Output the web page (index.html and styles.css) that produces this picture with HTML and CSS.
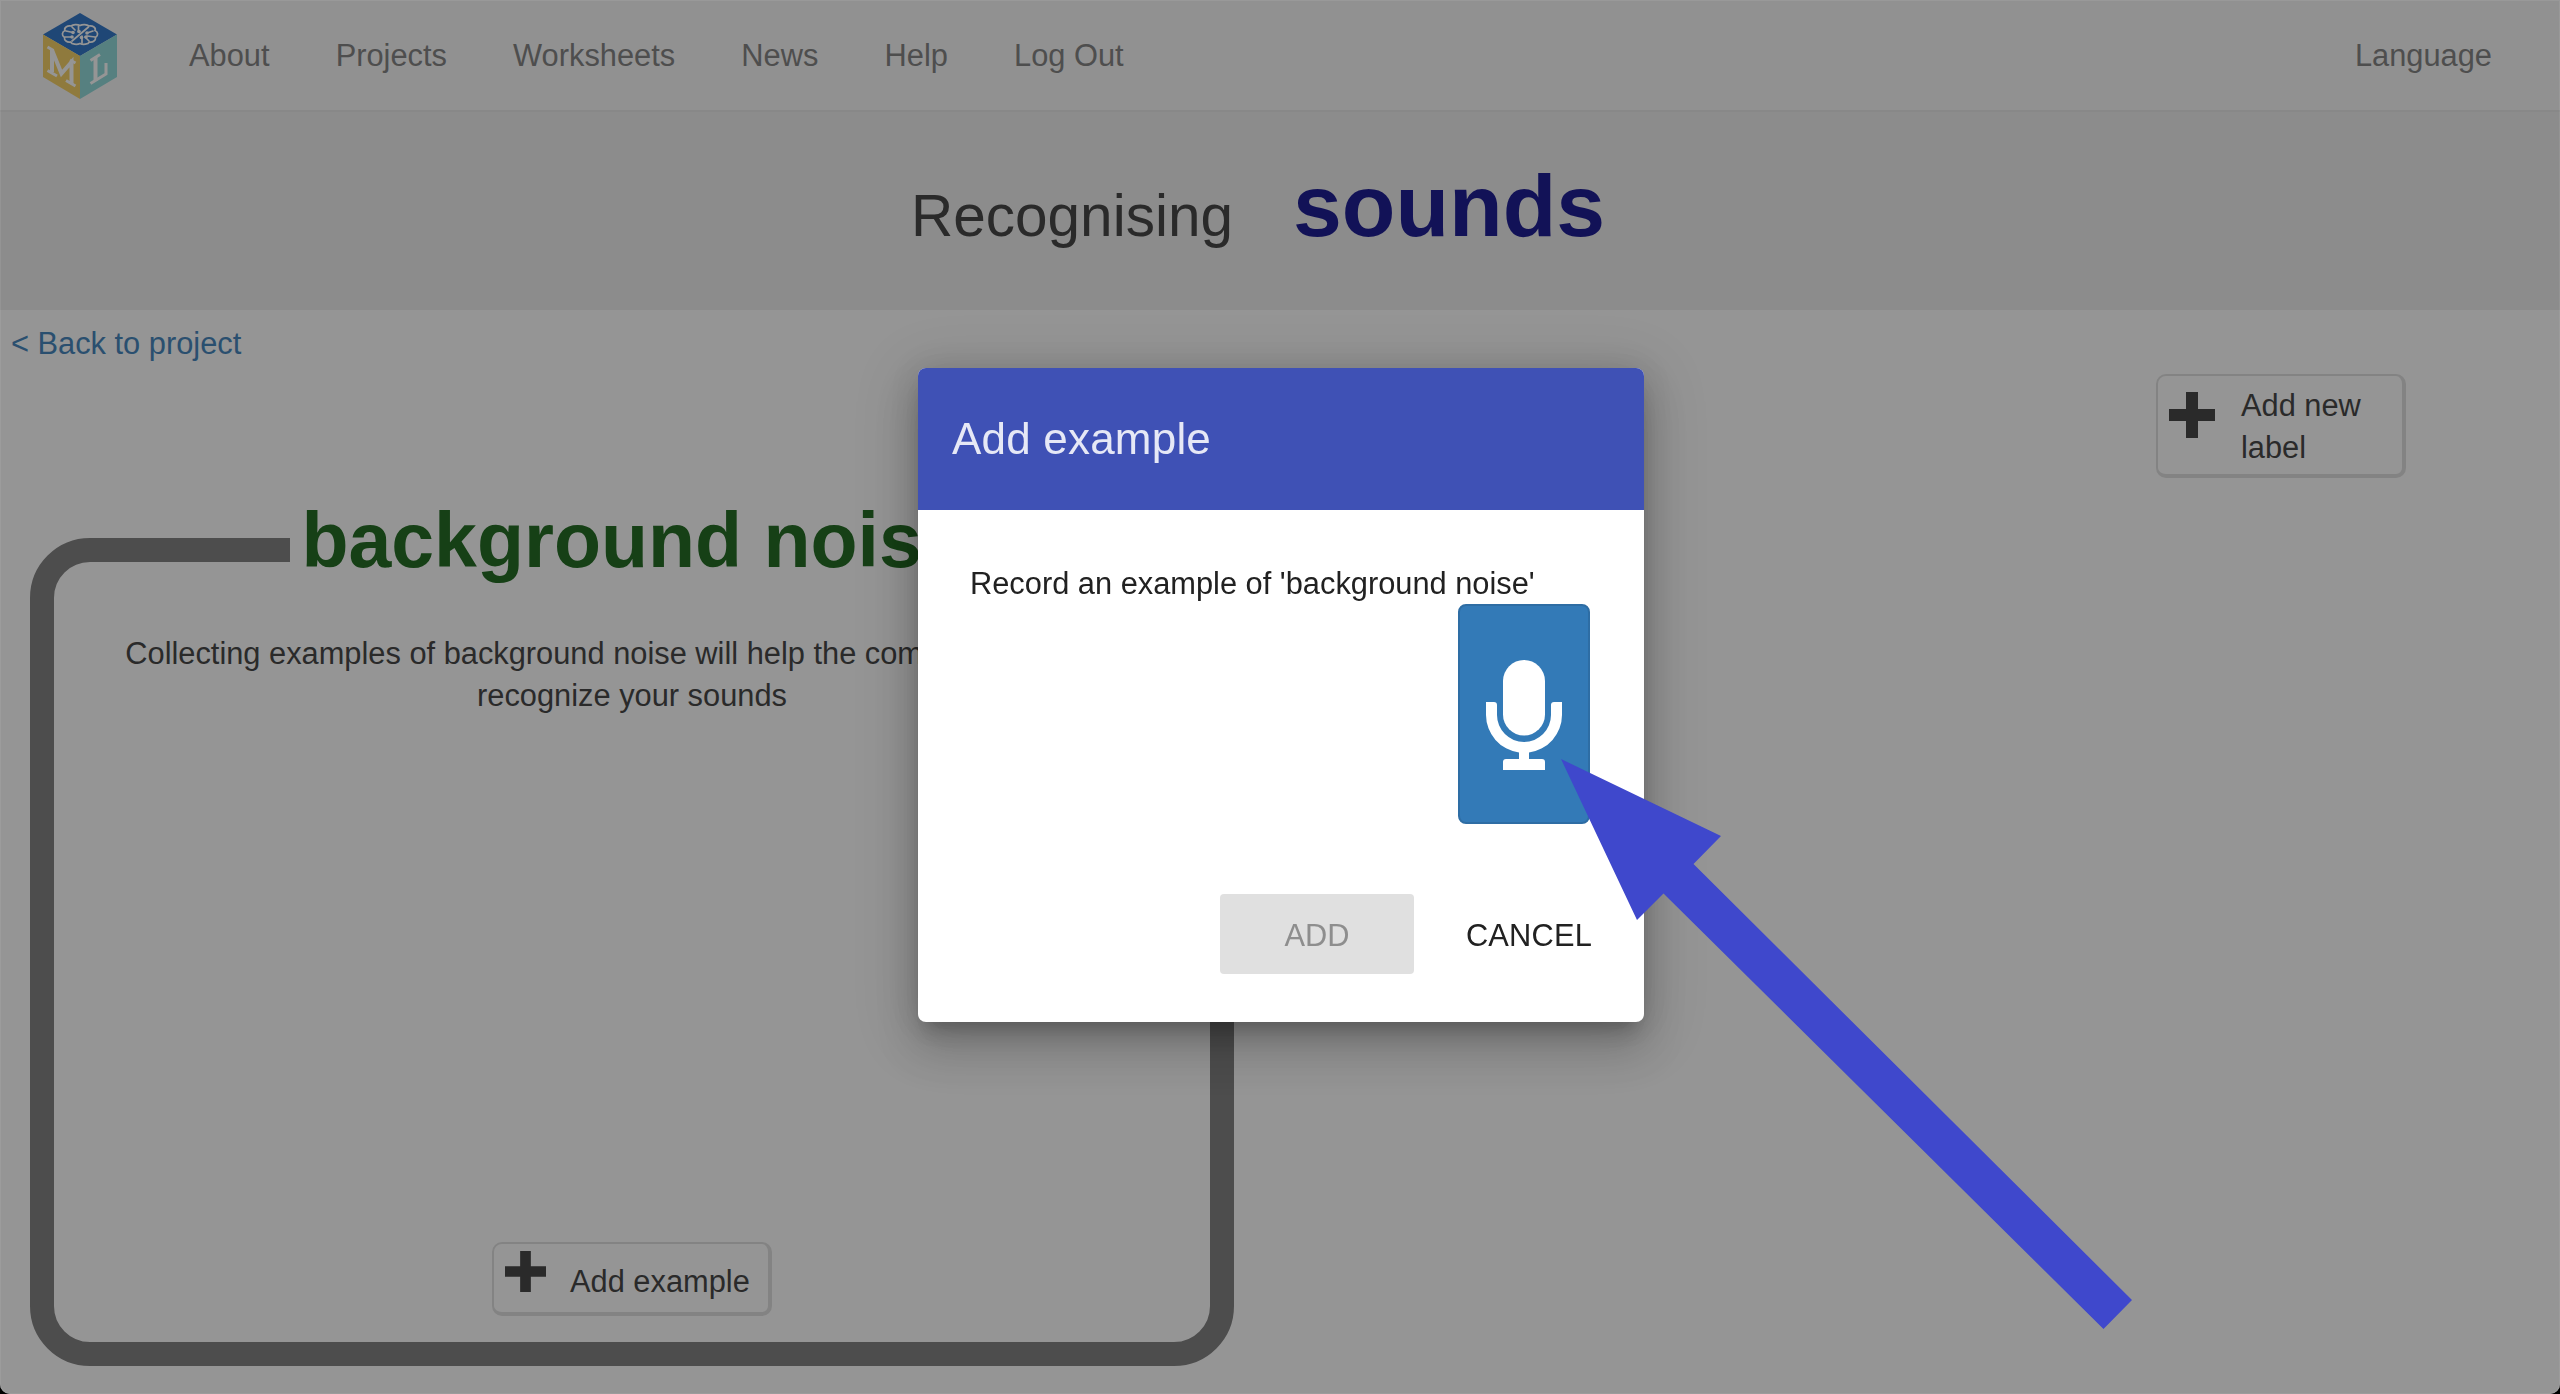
FILE: index.html
```html
<!DOCTYPE html>
<html lang="en">
<head>
<meta charset="utf-8">
<title>Machine Learning for Kids</title>
<link rel="stylesheet" href="styles.css">
</head>
<body>
<div class="window">
  <nav class="navbar">
    <svg class="logo" viewBox="0 0 74 86" width="74" height="86">
      <path fill="#1d6ac4" d="M37 0 74 21.500 37 43 0 21.500z"/>
      <path fill="#f4cc57" d="M0 21.500 37 43V86L0 64z"/>
      <path fill="#87d6d6" d="M74 21.500 37 43V86L74 64z"/>
      <g fill="none" stroke="#fff" stroke-width="1.700" stroke-linecap="round">
        <path d="M37 12.500a6 3.500 0 0 1 9 .5a5 3.500 0 0 1 6 4.500a4.500 4 0 0 1 .5 7a5 4 0 0 1-6 4.500a6 3.500 0 0 1-9.500 1.500a6 3.500 0 0 1-9.500-1.500a5 4 0 0 1-6-4.500a4.500 4 0 0 1 .5-7a5 3.500 0 0 1 6-4.500a6 3.500 0 0 1 9-.5z"/>
        <path d="M45.500 14 29 28M35.500 13v6M39 30v-7M23 18l7 1.500M22 24h7M50 18l-6 2M52 24l-8-1M29 14l3 3M46 28l-4-4"/>
      </g>
      <g fill="#fff">
        <circle cx="30" cy="19.500" r="1.800"/><circle cx="29" cy="24" r="1.800"/><circle cx="44" cy="20" r="1.800"/><circle cx="43" cy="24" r="1.800"/><circle cx="36" cy="18.500" r="1.800"/><circle cx="38.500" cy="24.500" r="1.800"/>
      </g>
      <g fill="none" stroke="#fff" stroke-width="4">
        <path d="M9 36V59M9 37 18.500 60.500 28.500 49V71"/>
        <path stroke-width="3" d="M4.500 34l6 3.500M4.500 57.500l9.500 5.500M27 47l5.500 3M23 67.500l9.500 5.500"/>
        <path d="M52.500 44V68"/>
        <path stroke-width="3" d="M47.500 47.500l9.500-6M47.500 70.500 63 61V50"/>
      </g>
    </svg>
    <div class="links">
      <a>About</a><a>Projects</a><a>Worksheets</a><a>News</a><a>Help</a><a>Log Out</a>
    </div>
    <a class="language">Language</a>
  </nav>
  <header class="banner">
    <span class="lead">Recognising</span>
    <span class="project">sounds</span>
  </header>
  <main>
    <a class="back">&lt; Back to project</a>
    <button class="tool new-label">
      <svg viewBox="0 0 46 46" width="46" height="46"><path d="M17 0h12v17h17v12H29v17H17V29H0V17h17z"/></svg>
      <span>Add new<br>label</span>
    </button>
    <section class="bucket">
      <h2>background noise</h2>
      <p>Collecting examples of background noise will help the computer to learn to<br>recognize your sounds</p>
      <button class="tool add-example">
        <svg viewBox="0 0 46 46" width="41" height="41"><path d="M17 0h12v17h17v12H29v17H17V29H0V17h17z"/></svg>
        <span>Add example</span>
      </button>
    </section>
  </main>
</div>
<div class="backdrop">
  <div class="dialog">
    <div class="dialog-title">Add example</div>
    <div class="dialog-body">
      <div class="prompt">Record an example of 'background noise'</div>
      <button class="mic">
        <svg viewBox="0 0 76 110" width="76" height="110">
          <rect x="17" width="42" height="75.500" rx="21" fill="#fff"/>
          <path fill="#fff" d="M0 42h8q3 0 3 3V55a27 27 0 0 0 54 0V45q0-3 3-3h8V55A38 38 0 0 1 43 92.500V99h13q3 0 3 3v8H17v-8q0-3 3-3h13V92.500A38 38 0 0 1 0 55z"/>
        </svg>
      </button>
    </div>
    <div class="actions">
      <button class="add">ADD</button>
      <button class="cancel">CANCEL</button>
    </div>
  </div>
</div>
<svg class="pointer" viewBox="0 0 571 570" width="571" height="570"><path fill="#3f48cc" d="M0 0 160 77 132.500 105 571 541 542.500 570 102.500 134.500 76 161z"/></svg>
</body>
</html>
```
FILE: styles.css
```css
* { box-sizing: border-box; }

body {
  margin: 0;
  background: #000;
  color: #333;
  font: 30.8px/42px "Liberation Sans", Arial, sans-serif;
}

button { font: inherit; color: inherit; }

.window {
  height: 1394px;
  display: flex;
  flex-direction: column;
  background: #fff;
  border-radius: 0 0 10px 10px;
  overflow: hidden;
}

.navbar {
  height: 112px;
  display: flex;
  align-items: center;
  padding: 2px 68px 0 43px;
  background: #f8f8f8;
  border-bottom: 2px solid #e7e7e7;
  color: #777;
}

.links { display: flex; gap: 66.2px; margin-left: 72px; }
.language { margin-left: auto; }

.banner {
  height: 198px;
  display: flex;
  align-items: baseline;
  gap: 60px;
  padding: 50px 0 0 911px;
  background: #eee;
  line-height: 88px;
}

.lead { font-size: 58.5px; }
.project { font-size: 87.8px; font-weight: bold; color: #050588; }

main {
  flex: 1;
  display: flex;
  flex-direction: column;
  align-items: flex-start;
  padding: 13px 0 27px;
}

.back { margin-left: 11px; color: #337ab7; }

.tool {
  display: flex;
  text-align: left;
  background: #fff;
  border: 2px solid #ddd;
  border-right-width: 4px;
  border-bottom-width: 4px;
  border-radius: 10px;
  fill: #333;
}

.new-label {
  width: 250px;
  height: 104px;
  align-self: flex-end;
  gap: 26px;
  margin: 9px 154px 0 0;
  padding: 9px 0 0 11px;
}

.new-label svg { margin-top: 7px; }

.bucket {
  width: 1204px;
  height: 828px;
  display: flex;
  flex-direction: column;
  align-items: center;
  margin: 60px 0 0 30px;
  padding-bottom: 26px;
  border: 24px solid #767676;
  border-radius: 60px;
}

.bucket h2 {
  margin: -64px 0 0;
  padding: 0 9px 0 11px;
  background: #fff;
  color: #0c5c0c;
  font-size: 77px;
  line-height: 84px;
}

.bucket p { margin: 51px -20px 0; text-align: center; white-space: nowrap; }

.add-example {
  width: 280px;
  height: 74px;
  gap: 24px;
  margin-top: auto;
  padding: 7px 0 0 11px;
}

.add-example span { margin-top: 10px; white-space: nowrap; }

.backdrop {
  position: fixed;
  inset: 0;
  display: grid;
  place-content: center;
  padding: 0 0 4px 2px;
  background: rgba(33, 33, 33, 0.48);
  border-radius: 0 0 10px 10px;
  box-shadow: inset 0 0 0 1px rgba(255, 255, 255, .06);
}

.dialog {
  width: 726px;
  height: 654px;
  display: flex;
  flex-direction: column;
  border-radius: 8px;
  overflow: hidden;
  background: #fff;
  color: #212121;
  box-shadow: 0 14px 18px -8px rgba(0, 0, 0, .2), 0 26px 40px 4px rgba(0, 0, 0, .14), 0 10px 60px 10px rgba(0, 0, 0, .12), 0 0 30px rgba(0, 0, 0, .1);
}

.dialog-title {
  height: 142px;
  padding-left: 34px;
  background: #3f51b5;
  color: rgba(255, 255, 255, .87);
  font-size: 44px;
  letter-spacing: .2px;
  line-height: 142px;
}

.dialog-body {
  display: flex;
  flex-direction: column;
  padding: 53px 54px 0 52px;
}

.mic {
  width: 132px;
  height: 220px;
  display: grid;
  place-content: center;
  align-self: flex-end;
  margin-top: -1px;
  background: #337ab7;
  border: 2px solid #2e6da4;
  border-radius: 8px;
  padding: 2px 0 0;
}

.actions {
  display: flex;
  justify-content: flex-end;
  gap: 32px;
  margin-top: 70px;
  padding-right: 32px;
}

.actions button { height: 80px; padding: 4px 0 0; border: 0; border-radius: 4px; }
.actions .add { width: 194px; background: #e0e0e0; color: #8e8e8e; }
.actions .cancel { width: 166px; background: none; letter-spacing: .2px; }

.pointer { position: fixed; left: 1561px; top: 759px; }
```
